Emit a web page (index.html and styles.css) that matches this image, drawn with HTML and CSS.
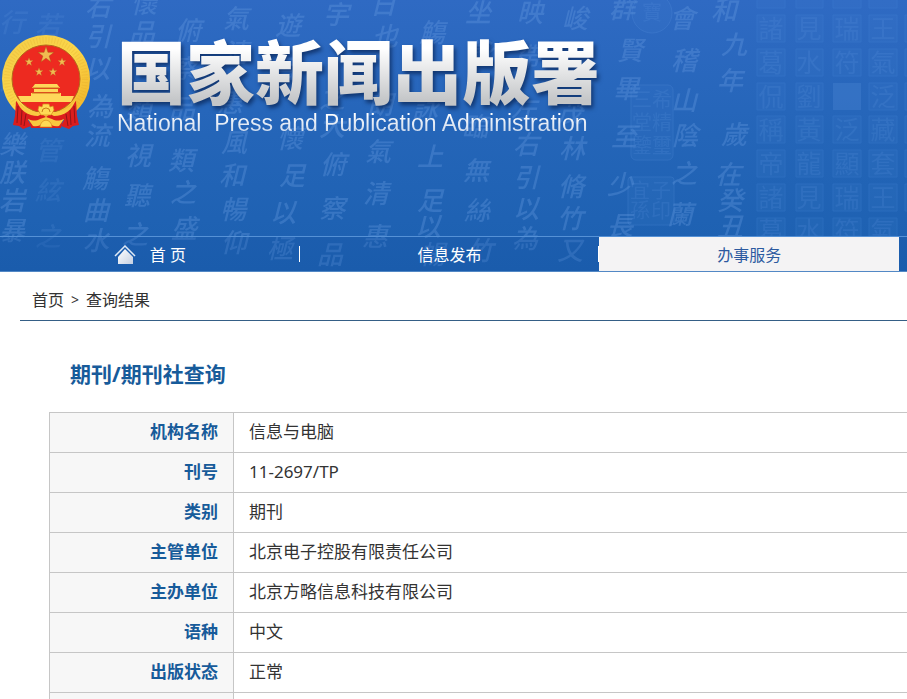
FILE: index.html
```
<!DOCTYPE html>
<html lang="zh-CN">
<head>
	<meta charset="UTF-8">
	<meta name="viewport" content="width=device-width, initial-scale=1.0">
	<title>国家新闻出版署</title>
	<link rel="stylesheet" href="styles.css">
</head>
<body>
	<header class="header">
		<!-- calligraphy backdrop -->
		<svg class="backdrop" viewBox="0 0 907 271" preserveAspectRatio="xMinYMin slice" aria-hidden="true">
			<g class="script">
				<text class="seal-script" x="12 12 12 12" y="154 182 210 240">樂朕岩暴</text>
				<text class="pale" x="12 12" y="32 90">行之</text>
				<text class="pale" x="48 48 48 48" y="35 160 200 246">若管絃之</text>
				<text x="98 98 97 100 97 95 96 96" y="16 46 78 116 145 188 220 250">右引以為流觴曲水</text>
				<text x="144 142 138 138 137 135" y="13 42 120 165 205 244">懷品類視聽之</text>
				<text x="188 184 182 181 183 184" y="40 78 118 170 202 238">俯察品類之盛</text>
				<text x="236 236 230 234 232 233 234" y="28 62 112 152 185 219 252">氣清惠風和暢仰</text>
				<text x="288 284 290 292 283 280" y="35 78 148 185 222 258">遊目懷足以極</text>
				<text x="336 332 332 333 332 330" y="24 108 136 174 218 264">宇之大俯察品</text>
				<text x="383 385 380 378 376 375" y="14 46 114 161 203 246">日也朗氣清惠</text>
				<text x="432 425 430 430 428 432" y="42 118 166 210 236 264">觴詠上足以暢</text>
				<text x="478 480 475 476 477 480" y="22 62 136 180 220 260">坐詠臨無絲竹</text>
				<text x="530 528 524 526 526 526 525" y="22 66 118 154 187 218 248">映帶左右引以為</text>
				<text x="575 570 572 571 570 570" y="28 122 158 196 228 260">峻茂林脩竹又</text>
				<text x="622 630 626 624 620 620" y="18 60 98 146 194 235">群賢畢至少長</text>
				<text x="682 684 684 685 684 680" y="28 70 110 145 183 224">會稽山陰之蘭</text>
				<text x="724 734 730 734 728 730 730" y="20 54 90 144 184 210 236">和九年歲在癸丑</text>
			</g>
			<g class="seals">
				<circle cx="652" cy="13" r="20"/>
				<rect x="631" y="85" width="42" height="75" rx="5"/>
				<rect x="628" y="177" width="46" height="48" rx="3"/>
				<text x="642 662 642 662 642 662" y="107 107 130 130 153 153">三希堂精鑒璽</text>
				<text x="640 661 640 661" y="198 198 218 218">宜子孫印</text>
				<text x="652" y="20">寶</text>
			</g>
			<g class="types">
				<g class="blocks">
					<path d="M757-19h28v27h-28zM796-19h27v27h-27zM833-19h28v27h-28zM869-19h28v27h-28z"/>
					<path d="M757 15h28v27h-28zM796 15h27v27h-27zM833 15h28v27h-28zM869 15h28v27h-28z"/>
					<path d="M757 49h28v27h-28zM796 49h27v27h-27zM833 49h28v27h-28zM869 49h28v27h-28z"/>
					<path d="M757 83h28v27h-28zM796 83h27v27h-27zM869 83h28v27h-28z"/>
					<path d="M757 116h28v27h-28zM796 116h27v27h-27zM833 116h28v27h-28zM869 116h28v27h-28z"/>
					<path d="M757 150h28v27h-28zM796 150h27v27h-27zM833 150h28v27h-28zM869 150h28v27h-28z"/>
					<path d="M757 184h28v27h-28zM796 184h27v27h-27zM833 184h28v27h-28zM869 184h28v27h-28z"/>
					<path d="M757 218h28v18h-28zM796 218h27v18h-27zM833 218h28v18h-28zM869 218h28v18h-28z"/>
					<path d="M905 15h9v27h-9zM905 49h9v27h-9zM905 83h9v27h-9zM905 116h9v27h-9zM905 150h9v27h-9zM905 184h9v27h-9z"/>
				</g>
				<path class="blank" d="M833 83h28v27h-28z"/>
				<text x="771 809 847 883" y="38 38 38 38">諸見瑞王</text>
				<text x="771 809 847 883" y="72 72 72 72">葛水符氣</text>
				<text x="771 809 883" y="106 106 106">侃劉泛</text>
				<text x="771 809 847 883" y="139 139 139 139">稱黃泛藏</text>
				<text x="771 809 847 883" y="173 173 173 173">帝龍顯套</text>
				<text x="771 809 847 883" y="207 207 207 207">諸見瑞王</text>
				<text x="771 809 847 883" y="240 240 240 240">葛水符氣</text>
			</g>
		</svg>

		<div class="brand">
			<svg class="emblem" viewBox="0 0 90 96" role="img" aria-label="国徽">
				<defs>
					<linearGradient id="gold" x1="0" y1="0" x2="1" y2="1">
						<stop offset="0" stop-color="#f3cc48"/>
						<stop offset=".5" stop-color="#fbd64a"/>
						<stop offset="1" stop-color="#f0ae22"/>
					</linearGradient>
					<path id="star" d="M0-10 2.3-3.1 9.5-3.1 3.7 1.2 5.9 8.1 0 3.8-5.9 8.1-3.7 1.2-9.5-3.1-2.3-3.1z"/>
				</defs>
				<circle cx="45" cy="45" r="44" fill="url(#gold)"/>
				<circle cx="45" cy="45" r="39" fill="none" stroke="#dc9d24" stroke-width="6" stroke-dasharray="1 2" opacity=".2"/>
				<circle cx="45" cy="45" r="34" fill="#ed2a20" stroke="#b5691b"/>
				<g fill="#f0bb50" stroke="#a84c16" stroke-width=".5">
					<use href="#star" transform="translate(45 21) scale(.85)"/>
					<use href="#star" transform="translate(28 28) scale(.45)"/>
					<use href="#star" transform="translate(61 28) scale(.45)"/>
					<use href="#star" transform="translate(38 38) scale(.45)"/>
					<use href="#star" transform="translate(52 38) scale(.45)"/>
				</g>
				<!-- gate -->
				<path fill="#ffd75a" d="M34 50h22l3 4H31zM33 55h24v3H33zM30 59h30v3h13l-3 6H20l-3-6h13z"/>
				<path stroke="#cb731b" d="M32 54h26M31 59h28"/>
				<!-- drapes -->
				<path fill="#dc1d1d" d="M15 67 31 81 27 86 30 92 22 95 18 92 12 91 14 82zM75 67 59 81 63 86 60 92 68 95 72 92 78 91 76 82z"/>
				<path fill="none" stroke="#8f1518" d="M17 72l-1 17M21 76l-1 15M25 80l-2 12M73 72l1 17M69 76l1 15M65 80l2 12"/>
				<path fill="#dc1d1d" d="M27 80h36l-3 14H30z"/>
				<path fill="#f9ca42" d="M15 65c8 11 15 13 23 13l2-5h10l2 5c8 0 15-2 23-13-4 12-12 17-22 17l-4-2-4 3-4-3-4 2c-10 0-18-5-22-17z"/>
				<!-- gear and ribbon -->
				<path fill="#ffda55" stroke="#d98c1d" stroke-width=".7" d="M37 76l1-4 3 1 1-3h6l1 3 3-1 1 4-3 5H40z"/>
				<path fill="none" stroke="#c97d1c" d="M41 78a4 4 0 0 1 8 0"/>
				<path fill="#f8c83f" d="M27 85c5 2 8 2 12 0l6-2 6 2c4 2 7 2 12 0l-5 7c-5 1-8-1-10-3h-6c-2 2-5 4-10 3z"/>
				<path fill="#ffda55" stroke="#d98c1d" stroke-width=".7" d="M39 93c1-9 11-9 12 0z"/>
			</svg>
			<div class="brand-text">
				<h1 class="brand-cn">国家新闻出版署</h1>
				<p class="brand-en">National  Press and Publication Administration</p>
			</div>
		</div>

		<nav class="nav">
			<a class="nav-item" href="#">
				<svg class="home-icon" viewBox="0 0 22 19" aria-hidden="true">
					<defs>
						<linearGradient id="house" x1="0" y1="0" x2="1" y2="1">
							<stop offset="0" stop-color="#fff"/>
							<stop offset="1" stop-color="#c5d0e2"/>
						</linearGradient>
					</defs>
					<path d="M11 4 19 12V19H4V12z" fill="url(#house)"/>
					<path d="M1 11 11 1 21 11" fill="none" stroke="#dfe9f6" stroke-width="1.5"/>
				</svg>
				<span>首 页</span>
			</a>
			<a class="nav-item" href="#">信息发布</a>
			<a class="nav-item active" href="#">办事服务</a>
		</nav>
	</header>

	<main>
		<div class="crumbs">
			<a href="#">首页</a>
			<span class="arrow">&gt;</span>
			<span>查询结果</span>
		</div>
		<section class="result">
			<h2 class="result-title">期刊/期刊社查询</h2>
			<table class="info">
				<tr><th scope="row">机构名称</th><td>信息与电脑</td></tr>
				<tr><th scope="row">刊号</th><td>11-2697/TP</td></tr>
				<tr><th scope="row">类别</th><td>期刊</td></tr>
				<tr><th scope="row">主管单位</th><td>北京电子控股有限责任公司</td></tr>
				<tr><th scope="row">主办单位</th><td>北京方略信息科技有限公司</td></tr>
				<tr><th scope="row">语种</th><td>中文</td></tr>
				<tr><th scope="row">出版状态</th><td>正常</td></tr>
				<tr><th scope="row"></th><td></td></tr>
			</table>
		</section>
	</main>
</body>
</html>
```
FILE: styles.css
```
* {
	box-sizing: border-box;
}
body {
	margin: 0;
	height: 100vh;
	overflow: hidden;
	background: #fff;
	color: #333;
	font-family: 'Noto Sans', 'Noto Sans CJK SC', sans-serif;
	font-size: 16px;
}
a {
	color: inherit;
	text-decoration: none;
}

/* header */
.header {
	position: relative;
	overflow: hidden;
	background: linear-gradient(#2f6ac3, #2465b8 50%, #1c60b0);
	border-bottom: 1px solid #5288c5;
}
.backdrop {
	position: absolute;
	top: 0;
	left: 0;
	width: 100%;
	height: 100%;
	font-family: 'Noto Sans CJK TC', sans-serif;
	text-anchor: middle;
}
.script {
	fill: #6fa2e6;
	opacity: .3;
	font-size: 26px;
	font-style: italic;
	font-weight: 500;
}
.script .pale {
	opacity: .5;
}
.seals {
	fill: #5b94df;
	font-size: 20px;
	opacity: .25;
}
.seals rect,
.seals circle {
	fill-opacity: .3;
	stroke: #5b94df;
}
.types {
	fill: #5b94df;
	font-size: 25px;
	opacity: .25;
}
.blocks {
	fill-opacity: .3;
	stroke: #4b8ada;
}
.brand {
	position: relative;
	display: flex;
	height: 236px;
	padding: 34px 0 0 1px;
}
.emblem {
	flex: none;
	width: 90px;
	height: 96px;
}
.brand-text {
	padding-left: 26px;
	white-space: nowrap;
}
.brand-cn,
.brand-en {
	margin: 0;
	color: transparent;
	-webkit-background-clip: text;
	background-clip: text;
}
.brand-cn {
	font-family: 'Noto Sans CJK SC', sans-serif;
	font-size: 69px;
	font-weight: 900;
	line-height: 70px;
	padding-bottom: 4px;
	background-image: linear-gradient(#fff 20%, #c4c6c8 90%);
	filter: drop-shadow(2px 3px 2px rgba(0, 20, 60, .6));
}
.brand-en {
	font-family: 'Liberation Sans', Arial, sans-serif;
	font-size: 23px;
	line-height: 30px;
	white-space: pre;
	background-image: linear-gradient(#fff 20%, #c3d3ea 90%);
}

/* main menu */
.nav {
	position: relative;
	display: grid;
	grid-template-columns: repeat(3, 1fr);
	height: 35px;
	padding-right: 8px;
	border-top: 1px solid #5591d6;
	background: rgba(20, 80, 160, .2);
	color: #fff;
}
.nav-item {
	display: flex;
	align-items: center;
	justify-content: center;
	background: linear-gradient(#fff, #fff) no-repeat right center / 1px 16px;
}
.nav-item.active {
	background: #f4f3f4;
	color: #2c5aa0;
}
.home-icon {
	width: 22px;
	height: 19px;
	margin-right: 14px;
}

/* breadcrumb */
.crumbs {
	display: flex;
	align-items: center;
	gap: 7px;
	height: 49px;
	margin-left: 20px;
	padding: 6px 12px 0;
	border-bottom: 1px solid #355f86;
}
.arrow {
	font-size: 14px;
}

/* query result */
.result {
	padding-left: 49px;
}
.result-title {
	margin: 0;
	padding: 37px 21px 22px;
	color: #175b9a;
	font-size: 21px;
	line-height: 32px;
}
.info {
	width: 100%;
	border-collapse: collapse;
	font-size: 17px;
	line-height: 24px;
}
.info th,
.info td {
	height: 40px;
	padding: 0 15px 1px;
	border: 1px solid #c6c6c6;
	text-align: left;
}
.info th {
	width: 184px;
	background: #f7f7f7;
	color: #175b9a;
	text-align: right;
}
.info td {
	border-right: 0;
}
```
